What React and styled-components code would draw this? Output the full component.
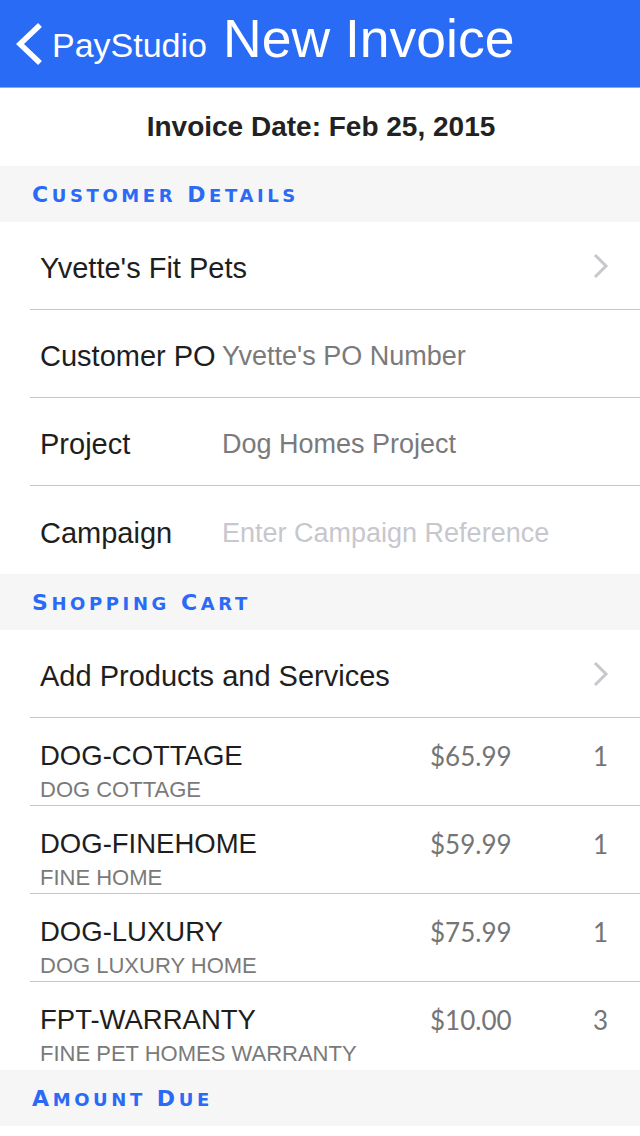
import styled, { createGlobalStyle } from "styled-components";

const GlobalStyle = createGlobalStyle`
  html, body {
    margin: 0;
    padding: 0;
    background: #ffffff;
  }
  body {
    font-family: "Liberation Sans", Arial, sans-serif;
    -webkit-font-smoothing: antialiased;
  }
`;

const Screen = styled.div`
  width: 640px;
  height: 1136px;
  overflow: hidden;
  background: #ffffff;
`;

const NavBar = styled.header`
  height: 75px;
  padding: 12px 0 0 13px;
  background: #2a6bf6;
  border-bottom: 1px solid #a9a9ad;
  display: flex;
  align-items: baseline;
  color: #ffffff;
`;

const BackArrow = styled.svg`
  align-self: flex-start;
  margin-top: 10px;
  margin-right: 9px;
`;

const BackLabel = styled.span`
  font-size: 34px;
  line-height: 1;
`;

const Title = styled.h1`
  margin: 0 0 0 16px;
  font-size: 53.5px;
  font-weight: 400;
  line-height: 1;
`;

const DateRow = styled.div`
  height: 78px;
  display: flex;
  align-items: center;
  justify-content: center;
  font-size: 28px;
  font-weight: 700;
  color: #222222;
  padding-left: 2px;
`;

const SectionHeader = styled.h2`
  margin: 0;
  height: 56px;
  background: #f6f6f6;
  display: flex;
  align-items: center;
  gap: 11px;
  padding: 1px 0 0 32px;
  box-sizing: border-box;
  color: #2a6af5;
  font-family: "DejaVu Sans", "Liberation Sans", sans-serif;
  font-size: 18px;
  font-weight: 700;
  text-transform: uppercase;
  letter-spacing: 3.6px;
`;

const HeaderWord = styled.span`
  display: inline-block;
  &::first-letter {
    font-size: 22px;
  }
`;

const Section = ({ title }) => (
  <SectionHeader>
    {title.split(" ").map((w) => (
      <HeaderWord key={w}>{w}</HeaderWord>
    ))}
  </SectionHeader>
);

const Row = styled.div`
  padding-left: 30px;
`;

const RowInner = styled.div`
  box-sizing: border-box;
  height: 88px;
  display: flex;
  align-items: center;
  padding: 6px 30px 0 10px;
  border-bottom: ${(p) => (p.$last ? "none" : "1px solid #c8c7cc")};
  font-size: 29px;
  color: #1e1e1e;
`;

const Label = styled.span`
  width: 182px;
  flex-shrink: 0;
`;

const Value = styled.span`
  flex: 1;
  font-size: 27px;
  color: ${(p) => (p.$placeholder ? "#c7c7cd" : "#7a7a7a")};
`;

const Grow = styled.span`
  flex: 1;
`;

const ChevronIcon = styled.svg`
  margin-top: -6px;
`;

const Chevron = () => (
  <ChevronIcon width="18" height="26" viewBox="0 0 18 26">
    <polyline
      points="3,2 14,13 3,24"
      fill="none"
      stroke="#c7c7cc"
      strokeWidth="3"
    />
  </ChevronIcon>
);

const ProductRow = styled.div`
  height: 88px;
  box-sizing: border-box;
  border-bottom: ${(p) => (p.$last ? "none" : "1px solid #c8c7cc")};
  display: grid;
  grid-template-columns: 390px 140px 1fr;
  grid-template-rows: auto auto;
  align-content: start;
  padding: 23px 32px 0 10px;
`;

const ProductName = styled.div`
  font-size: 27.5px;
  line-height: 30px;
  color: #1e1e1e;
`;

const ProductDesc = styled.div`
  grid-column: 1 / 4;
  font-size: 22px;
  line-height: 26px;
  margin-top: 6px;
  color: #7a7a7a;
`;

const Price = styled.div`
  font-family: Lato, "Liberation Sans", sans-serif;
  font-size: 26px;
  line-height: 30px;
  color: #757575;
`;

const Qty = styled.div`
  font-family: Lato, "Liberation Sans", sans-serif;
  font-size: 26px;
  line-height: 30px;
  color: #757575;
  text-align: right;
`;

const details = [
  { label: "Customer PO", value: "Yvette's PO Number" },
  { label: "Project", value: "Dog Homes Project" },
  { label: "Campaign", value: "Enter Campaign Reference", placeholder: true },
];

const products = [
  { sku: "DOG-COTTAGE", name: "DOG COTTAGE", price: "$65.99", qty: 1 },
  { sku: "DOG-FINEHOME", name: "FINE HOME", price: "$59.99", qty: 1 },
  { sku: "DOG-LUXURY", name: "DOG LUXURY HOME", price: "$75.99", qty: 1 },
  { sku: "FPT-WARRANTY", name: "FINE PET HOMES WARRANTY", price: "$10.00", qty: 3 },
];

export default function App() {
  return (
    <Screen>
      <GlobalStyle />
      <NavBar>
        <BackArrow width="30" height="44" viewBox="0 0 30 44">
          <polyline
            points="27,3 7,22 27,41"
            fill="none"
            stroke="#ffffff"
            strokeWidth="5.5"
          />
        </BackArrow>
        <BackLabel>PayStudio</BackLabel>
        <Title>New Invoice</Title>
      </NavBar>

      <DateRow>Invoice Date: Feb 25, 2015</DateRow>

      <Section title="Customer Details" />
      <Row>
        <RowInner>
          <Grow>Yvette's Fit Pets</Grow>
          <Chevron />
        </RowInner>
      </Row>
      {details.map((d, i) => (
        <Row key={d.label}>
          <RowInner $last={i === details.length - 1}>
            <Label>{d.label}</Label>
            <Value $placeholder={d.placeholder}>{d.value}</Value>
          </RowInner>
        </Row>
      ))}

      <Section title="Shopping Cart" />
      <Row>
        <RowInner>
          <Grow>Add Products and Services</Grow>
          <Chevron />
        </RowInner>
      </Row>
      {products.map((p, i) => (
        <Row key={p.sku}>
          <ProductRow $last={i === products.length - 1}>
            <ProductName>{p.sku}</ProductName>
            <Price>{p.price}</Price>
            <Qty>{p.qty}</Qty>
            <ProductDesc>{p.name}</ProductDesc>
          </ProductRow>
        </Row>
      ))}

      <Section title="Amount Due" />
    </Screen>
  );
}
